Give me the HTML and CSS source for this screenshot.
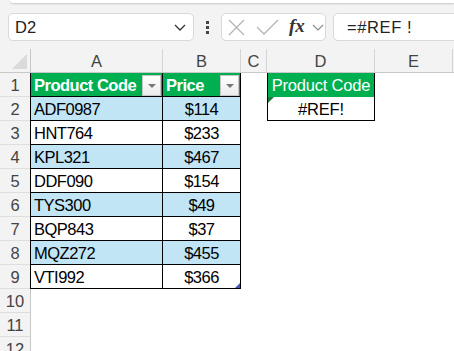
FILE: index.html
```html
<!DOCTYPE html>
<html lang="en">
<head>
  <meta charset="UTF-8" />
  <title>Sheet</title>
  <link rel="stylesheet" href="styles.css">
</head>
<body>

  <div class="ribbon-edge"></div>

  <div class="formula-bar">
    <div class="name-box">
      <span>D2</span>
      <svg width="12" height="8" viewBox="0 0 12 8"><polyline points="1,2 6,7 11,2" fill="none" stroke="#333" stroke-width="1.3"/></svg>
    </div>
    <div class="dots"><i></i><i></i><i></i></div>
    <div class="fx-box">
      <svg width="17" height="17" viewBox="0 0 17 17"><path d="M1 1 L16 16 M16 1 L1 16" stroke="#b4b4b4" stroke-width="1.3"/></svg>
      <svg width="23" height="16" viewBox="0 0 23 16"><polyline points="1,8 8,15 22,1" fill="none" stroke="#b4b4b4" stroke-width="1.3"/></svg>
      <span class="fx">fx</span>
      <svg width="12" height="7" viewBox="0 0 12 7"><polyline points="1,1 6,6 11,1" fill="none" stroke="#888" stroke-width="1.1"/></svg>
    </div>
    <div class="formula-input">=#REF !</div>
  </div>

  <div class="sheet">
    <!-- column headers -->
    <div class="corner"><span class="corner-tri"></span></div>
    <div class="col-head">A</div>
    <div class="col-head">B</div>
    <div class="col-head">C</div>
    <div class="col-head">D</div>
    <div class="col-head">E</div>
    <div class="col-head rest"></div>

    <!-- row 1 -->
    <div class="row-head">1</div>
    <div class="cell col-a tbl head-green bold">Product Code<span class="filter"></span></div>
    <div class="cell tbl head-green bold">Price<span class="filter"></span></div>
    <div class="cell"></div>
    <div class="cell res head-green center">Product Code</div>
    <div class="cell"></div>
    <div class="cell"></div>

    <!-- row 2 -->
    <div class="row-head">2</div>
    <div class="cell col-a tbl blue">ADF0987</div>
    <div class="cell tbl blue center">$114</div>
    <div class="cell"></div>
    <div class="cell res center err">#REF!</div>
    <div class="cell"></div>
    <div class="cell"></div>

    <div class="row-head">3</div>
    <div class="cell col-a tbl">HNT764</div>
    <div class="cell tbl center">$233</div>
    <div class="cell"></div><div class="cell"></div><div class="cell"></div><div class="cell"></div>

    <div class="row-head">4</div>
    <div class="cell col-a tbl blue">KPL321</div>
    <div class="cell tbl blue center">$467</div>
    <div class="cell"></div><div class="cell"></div><div class="cell"></div><div class="cell"></div>

    <div class="row-head">5</div>
    <div class="cell col-a tbl">DDF090</div>
    <div class="cell tbl center">$154</div>
    <div class="cell"></div><div class="cell"></div><div class="cell"></div><div class="cell"></div>

    <div class="row-head">6</div>
    <div class="cell col-a tbl blue">TYS300</div>
    <div class="cell tbl blue center">$49</div>
    <div class="cell"></div><div class="cell"></div><div class="cell"></div><div class="cell"></div>

    <div class="row-head">7</div>
    <div class="cell col-a tbl">BQP843</div>
    <div class="cell tbl center">$37</div>
    <div class="cell"></div><div class="cell"></div><div class="cell"></div><div class="cell"></div>

    <div class="row-head">8</div>
    <div class="cell col-a tbl blue">MQZ272</div>
    <div class="cell tbl blue center">$455</div>
    <div class="cell"></div><div class="cell"></div><div class="cell"></div><div class="cell"></div>

    <div class="row-head">9</div>
    <div class="cell col-a tbl">VTI992</div>
    <div class="cell tbl center last">$366<span class="handle"></span></div>
    <div class="cell"></div><div class="cell"></div><div class="cell"></div><div class="cell"></div>

    <div class="row-head">10</div>
    <div class="cell col-a"></div>
    <div class="cell"></div><div class="cell"></div><div class="cell"></div><div class="cell"></div><div class="cell"></div>

    <div class="row-head">11</div>
    <div class="cell col-a"></div>
    <div class="cell"></div><div class="cell"></div><div class="cell"></div><div class="cell"></div><div class="cell"></div>

    <div class="row-head">12</div>
    <div class="cell col-a"></div>
    <div class="cell"></div><div class="cell"></div><div class="cell"></div><div class="cell"></div><div class="cell"></div>
  </div>

</body>
</html>
```

FILE: styles.css
```css
body {
  margin: 0;
  background-color: #f3f3f3;
  font-family: "Liberation Sans", Arial, sans-serif;
  overflow: hidden;
}

.ribbon-edge {
  height: 3px;
  margin-left: 10px;
  background: #fff;
  border-radius: 0 0 0 6px;
  box-shadow: 0 1px 2px rgba(0,0,0,0.18);
}

/* formula bar */
.formula-bar {
  display: flex;
  height: 28px;
  margin-top: 10px;
  padding-left: 8px;
}

.name-box {
  width: 186px;
  box-sizing: border-box;
  background: #fff;
  border: 1px solid #d9d9d9;
  border-radius: 5px;
  display: flex;
  align-items: center;
  justify-content: space-between;
  padding: 0 7px 0 6px;
  font-size: 16.5px;
  color: #222;
}

.dots {
  width: 27px;
  display: flex;
  flex-direction: column;
  align-items: center;
  justify-content: center;
  gap: 2px;
}
.dots i {
  width: 3px;
  height: 3px;
  background: #444;
}

.fx-box {
  width: 105px;
  box-sizing: border-box;
  background: #fff;
  border: 1px solid #d9d9d9;
  border-radius: 5px;
  display: flex;
  align-items: center;
  padding-left: 6px;
  gap: 9px;
}
.fx-box svg:nth-child(2) {
  margin-left: 2px;
}
.fx {
  font-family: "Liberation Serif", serif;
  font-style: italic;
  font-weight: bold;
  font-size: 19px;
  color: #333;
  margin-left: 1px;
  margin-top: -2px;
}
.fx-box svg:last-child {
  margin-left: -2px;
}

.formula-input {
  flex: 1;
  margin-left: 7px;
  margin-right: -10px;
  background: #fff;
  border: 1px solid #d9d9d9;
  border-radius: 5px;
  padding-left: 13px;
  font-size: 16.5px;
  line-height: 26px;
  color: #222;
  letter-spacing: 0.6px;
}

/* grid */
.sheet {
  margin-top: 8px;
  display: grid;
  grid-template-columns: 30px 133px 78px 26px 108px 78px 1fr;
  grid-auto-rows: 24px;
  font-size: 16.5px;
  letter-spacing: -0.5px;
}

.corner {
  position: relative;
  background: #f3f3f3;
  border-bottom: 1px solid #c8c8c8;
}
.corner-tri {
  position: absolute;
  right: 3px;
  bottom: 3px;
  width: 15px;
  height: 15px;
  background: #dadada;
  clip-path: polygon(100% 0, 100% 100%, 0 100%);
}

.col-head {
  box-sizing: border-box;
  background: #f3f3f3;
  border-right: 1px solid #d4d4d4;
  border-bottom: 1px solid #c8c8c8;
  color: #444;
  text-align: center;
  line-height: 25px;
  letter-spacing: 0;
}
.col-head:nth-child(2) {
  border-left: 1px solid #c8c8c8;
}
.col-head.rest {
  border-right: none;
}

.row-head {
  box-sizing: border-box;
  background: #f3f3f3;
  border-bottom: 1px solid #dedede;
  color: #444;
  text-align: center;
  line-height: 25px;
  letter-spacing: 0;
}

.cell {
  box-sizing: border-box;
  position: relative;
  background: #fff;
  line-height: 24px;
  padding: 0 3px;
  color: #000;
  white-space: nowrap;
}
.col-a {
  border-left: 1px solid #c8c8c8;
}

.tbl {
  border-right: 1px solid #000;
  border-bottom: 1px solid #000;
}
.col-a.tbl {
  border-left: 1px solid #000;
}
.blue {
  background: #c1e5f5;
}
.head-green {
  background: #00b050;
  color: #fff;
}
.bold {
  font-weight: bold;
}
.center {
  text-align: center;
}

.res {
  border-left: 1px solid #000;
  border-right: 1px solid #000;
  letter-spacing: -0.2px;
}
.err {
  border-bottom: 1px solid #000;
}
.err::before {
  content: "";
  position: absolute;
  left: 0;
  top: 0;
  width: 6px;
  height: 6px;
  background: #1d7a38;
  clip-path: polygon(0 0, 100% 0, 0 100%);
}

.filter {
  position: absolute;
  right: 1px;
  top: 2px;
  width: 19px;
  height: 21px;
  box-sizing: border-box;
  border: 1px solid #c6c6c6;
  background: linear-gradient(#ffffff, #ececec);
}
.filter::after {
  content: "";
  position: absolute;
  left: 5px;
  top: 8px;
  border-left: 4px solid transparent;
  border-right: 4px solid transparent;
  border-top: 4px solid #777;
}

.handle {
  position: absolute;
  right: 0;
  bottom: 0;
  width: 5px;
  height: 5px;
  background: #4557b8;
  clip-path: polygon(100% 0, 100% 100%, 0 100%);
}
```
